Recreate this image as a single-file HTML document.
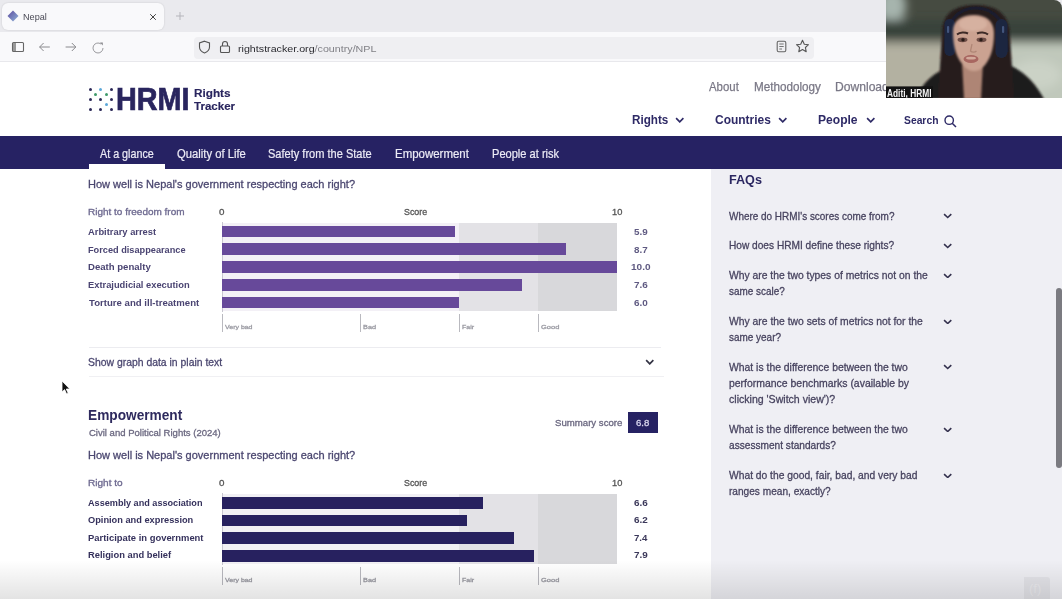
<!DOCTYPE html>
<html><head><meta charset="utf-8"><style>
html,body{margin:0;padding:0;width:1062px;height:599px;overflow:hidden;background:#fff;font-family:"Liberation Sans", sans-serif;}
.t{position:absolute;line-height:1;white-space:nowrap;transform-origin:0 0;}
.r{position:absolute;}
</style></head><body>
<div class="r" style="left:0.00px;top:0.00px;width:1062.00px;height:32.00px;background:#eaeaee;"></div>
<div class="r" style="left:2.00px;top:3.00px;width:162.00px;height:27.00px;background:#f9f9fb;border-radius:6px;box-shadow:0 0 2px rgba(0,0,0,0.15)"></div>
<svg class="r" style="left:7px;top:10px" width="12" height="12" viewBox="0 0 12 12"><defs><linearGradient id="tg" x1="0" y1="0" x2="1" y2="1"><stop offset="0" stop-color="#5b4a9e"/><stop offset="1" stop-color="#8fb3d9"/></linearGradient></defs><path d="M6 0.5 L11.5 6 L6 11.5 L0.5 6 Z" fill="url(#tg)"/></svg>
<div class="t" style="left:22.77px;top:13.26px;font-size:8.551px;font-weight:400;color:#4a4a55;transform:scaleX(1.0653);">Nepal</div>
<svg class="r" style="left:148.5px;top:13px" width="8" height="8" viewBox="0 0 8 8"><path d="M1.2 1.2 L6.8 6.8 M6.8 1.2 L1.2 6.8" stroke="#444" stroke-width="1"/></svg>
<svg class="r" style="left:175px;top:11px" width="10" height="10" viewBox="0 0 10 10"><path d="M5 1 V9 M1 5 H9" stroke="#b5b5bb" stroke-width="1"/></svg>
<div class="r" style="left:0.00px;top:32.00px;width:1062.00px;height:30.00px;background:#f9f9fb;"></div>
<div class="r" style="left:0.00px;top:60.50px;width:1062.00px;height:1.20px;background:#e8e8ec;"></div>
<svg class="r" style="left:11px;top:41px" width="14" height="12" viewBox="0 0 14 12"><rect x="1.5" y="1.5" width="11" height="9" rx="1" fill="none" stroke="#666" stroke-width="1.1"/><rect x="2" y="2" width="3" height="8" fill="#999"/></svg>
<svg class="r" style="left:38px;top:41px" width="14" height="12" viewBox="0 0 14 12"><path d="M11.8 6 H1.6 M5.6 2 L1.6 6 L5.6 10" fill="none" stroke="#8a8a8e" stroke-width="1"/></svg>
<svg class="r" style="left:64px;top:41px" width="14" height="12" viewBox="0 0 14 12"><path d="M1.6 6 H11.8 M7.8 2 L11.8 6 L7.8 10" fill="none" stroke="#8a8a8e" stroke-width="1"/></svg>
<svg class="r" style="left:91px;top:41px" width="14" height="13" viewBox="0 0 14 13"><path d="M12 7 A5 5 0 1 1 10 3" fill="none" stroke="#9a9a9e" stroke-width="1"/><path d="M9 1.6 L11.8 1.6 L11.8 4.4 Z" fill="#8a8a8e"/></svg>
<div class="r" style="left:193.50px;top:36.60px;width:620.50px;height:22.20px;background:#efeff2;border-radius:4px"></div>
<svg class="r" style="left:198px;top:40px" width="13" height="14" viewBox="0 0 13 14"><path d="M6.5 1.2 L11.5 3 V7 C11.5 10 9 12 6.5 13 C4 12 1.5 10 1.5 7 V3 Z" fill="none" stroke="#555" stroke-width="1.1"/></svg>
<svg class="r" style="left:219px;top:40px" width="12" height="14" viewBox="0 0 12 14"><rect x="1.5" y="6" width="9" height="6.5" rx="1" fill="none" stroke="#555" stroke-width="1.1"/><path d="M3.5 6 V4 A2.5 2.5 0 0 1 8.5 4 V6" fill="none" stroke="#555" stroke-width="1.1"/></svg>
<div class="t" style="left:238.45px;top:43.68px;font-size:9.710px;font-weight:400;color:#808086;transform:scaleX(1.1012);"><span style="color:#2b2b30">rightstracker.org</span>/country/NPL</div>
<svg class="r" style="left:776px;top:40px" width="11" height="13" viewBox="0 0 11 13"><rect x="1.2" y="1.2" width="8.6" height="10.6" rx="1.5" fill="none" stroke="#666" stroke-width="1.1"/><path d="M3.3 4 H7.7 M3.3 6.5 H7.7 M3.3 9 H6" stroke="#666" stroke-width="0.9"/></svg>
<svg class="r" style="left:795px;top:39px" width="15" height="15" viewBox="0 0 15 15"><path d="M7.5 1.3 L9.3 5.2 L13.5 5.7 L10.4 8.5 L11.2 12.7 L7.5 10.6 L3.8 12.7 L4.6 8.5 L1.5 5.7 L5.7 5.2 Z" fill="none" stroke="#555" stroke-width="1.1" stroke-linejoin="round"/></svg>
<div class="r" style="left:0.00px;top:62.00px;width:1062.00px;height:74.00px;background:#ffffff;"></div>
<div class="r" style="left:88.50px;top:88.00px;width:3.00px;height:3.00px;background:#2b2857;border-radius:50%"></div>
<div class="r" style="left:99.00px;top:88.00px;width:3.00px;height:3.00px;background:#5aa7d8;border-radius:50%"></div>
<div class="r" style="left:110.00px;top:88.00px;width:3.00px;height:3.00px;background:#2b2857;border-radius:50%"></div>
<div class="r" style="left:94.00px;top:93.00px;width:3.00px;height:3.00px;background:#3f9a6a;border-radius:50%"></div>
<div class="r" style="left:104.50px;top:93.00px;width:3.00px;height:3.00px;background:#3f9a6a;border-radius:50%"></div>
<div class="r" style="left:88.50px;top:98.00px;width:3.00px;height:3.00px;background:#2b2857;border-radius:50%"></div>
<div class="r" style="left:99.00px;top:98.00px;width:3.00px;height:3.00px;background:#2b2857;border-radius:50%"></div>
<div class="r" style="left:110.00px;top:98.00px;width:3.00px;height:3.00px;background:#2b2857;border-radius:50%"></div>
<div class="r" style="left:104.50px;top:102.80px;width:3.00px;height:3.00px;background:#5aa7d8;border-radius:50%"></div>
<div class="r" style="left:88.50px;top:107.90px;width:3.00px;height:3.00px;background:#2b2857;border-radius:50%"></div>
<div class="r" style="left:99.00px;top:107.90px;width:3.00px;height:3.00px;background:#2b2857;border-radius:50%"></div>
<div class="r" style="left:110.00px;top:107.90px;width:3.00px;height:3.00px;background:#2b2857;border-radius:50%"></div>
<div class="t" style="left:116.39px;top:84.30px;font-size:31.304px;font-weight:700;color:#29255e;transform:scaleX(0.9187);-webkit-text-stroke:0.7px currentColor">HRMI</div>
<div class="t" style="left:193.58px;top:87.79px;font-size:11.594px;font-weight:700;color:#29255e;transform:scaleX(1.0149);-webkit-text-stroke:0.15px currentColor">Rights</div>
<div class="t" style="left:194.28px;top:101.13px;font-size:11.304px;font-weight:700;color:#29255e;transform:scaleX(1.0224);-webkit-text-stroke:0.15px currentColor">Tracker</div>
<div class="t" style="left:708.90px;top:81.02px;font-size:12.029px;font-weight:400;color:#7a7886;transform:scaleX(0.9492);-webkit-text-stroke:0.25px currentColor">About</div>
<div class="t" style="left:753.56px;top:81.02px;font-size:12.029px;font-weight:400;color:#7a7886;transform:scaleX(0.9728);-webkit-text-stroke:0.25px currentColor">Methodology</div>
<div class="t" style="left:835.43px;top:81.02px;font-size:12.029px;font-weight:400;color:#7a7886;transform:scaleX(1.0073);-webkit-text-stroke:0.25px currentColor">Download</div>
<div class="t" style="left:631.58px;top:114.02px;font-size:12.029px;font-weight:700;color:#2e2a66;transform:scaleX(0.9727);">Rights</div>
<svg class="r" style="left:675.4px;top:116.5px" width="9.5" height="6" viewBox="0 0 9.5 6"><path d="M1.1 1.1 L4.75 4.9 L8.399999999999999 1.1" fill="none" stroke="#2e2a66" stroke-width="1.6"/></svg>
<div class="t" style="left:715.02px;top:114.02px;font-size:12.029px;font-weight:700;color:#2e2a66;transform:scaleX(0.9965);">Countries</div>
<svg class="r" style="left:778px;top:116.5px" width="9.5" height="6" viewBox="0 0 9.5 6"><path d="M1.1 1.1 L4.75 4.9 L8.399999999999999 1.1" fill="none" stroke="#2e2a66" stroke-width="1.6"/></svg>
<div class="t" style="left:817.55px;top:114.02px;font-size:12.029px;font-weight:700;color:#2e2a66;transform:scaleX(1.0044);">People</div>
<svg class="r" style="left:865.5px;top:116.5px" width="9.5" height="6" viewBox="0 0 9.5 6"><path d="M1.1 1.1 L4.75 4.9 L8.399999999999999 1.1" fill="none" stroke="#2e2a66" stroke-width="1.6"/></svg>
<div class="t" style="left:904.49px;top:114.68px;font-size:11.014px;font-weight:700;color:#2e2a66;transform:scaleX(0.9387);">Search</div>
<svg class="r" style="left:944px;top:115px" width="13" height="13" viewBox="0 0 13 13"><circle cx="5.2" cy="5.2" r="4.2" fill="none" stroke="#2e2a66" stroke-width="1.4"/><path d="M8.2 8.2 L12 12" stroke="#2e2a66" stroke-width="1.5"/></svg>
<div class="r" style="left:0.00px;top:136.00px;width:1062.00px;height:33.20px;background:#262263;"></div>
<div class="t" style="left:100.00px;top:149.04px;font-size:11.884px;font-weight:400;color:#ecebf6;transform:scaleX(0.9059);-webkit-text-stroke:0.2px currentColor">At a glance</div>
<div class="t" style="left:176.84px;top:149.04px;font-size:11.884px;font-weight:400;color:#ecebf6;transform:scaleX(0.9477);-webkit-text-stroke:0.2px currentColor">Quality of Life</div>
<div class="t" style="left:268.45px;top:149.04px;font-size:11.884px;font-weight:400;color:#ecebf6;transform:scaleX(0.9292);-webkit-text-stroke:0.2px currentColor">Safety from the State</div>
<div class="t" style="left:395.08px;top:149.04px;font-size:11.884px;font-weight:400;color:#ecebf6;transform:scaleX(0.9658);-webkit-text-stroke:0.2px currentColor">Empowerment</div>
<div class="t" style="left:491.61px;top:149.04px;font-size:11.884px;font-weight:400;color:#ecebf6;transform:scaleX(0.9329);-webkit-text-stroke:0.2px currentColor">People at risk</div>
<div class="r" style="left:88.60px;top:164.30px;width:76.60px;height:4.90px;background:#ffffff;"></div>
<div class="r" style="left:0.00px;top:169.20px;width:711.00px;height:430.00px;background:#ffffff;"></div>
<div class="r" style="left:711.00px;top:169.20px;width:351.00px;height:430.00px;background:#efeff4;"></div>
<div class="t" style="left:88.42px;top:179.19px;font-size:11.594px;font-weight:400;color:#4b4770;transform:scaleX(0.9508);-webkit-text-stroke:0.3px currentColor">How well is Nepal's government respecting each right?</div>
<div class="t" style="left:87.80px;top:208.17px;font-size:9.130px;font-weight:400;color:#6e6a90;transform:scaleX(1.0941);-webkit-text-stroke:0.3px currentColor">Right to freedom from</div>
<div class="t" style="left:218.91px;top:208.17px;font-size:9.130px;font-weight:400;color:#555;transform:scaleX(1.0724);-webkit-text-stroke:0.3px currentColor">0</div>
<div class="t" style="left:404.06px;top:208.17px;font-size:9.130px;font-weight:400;color:#555;transform:scaleX(0.9735);-webkit-text-stroke:0.3px currentColor">Score</div>
<div class="t" style="left:611.56px;top:208.17px;font-size:9.130px;font-weight:400;color:#555;transform:scaleX(1.0178);-webkit-text-stroke:0.3px currentColor">10</div>
<div class="r" style="left:222.00px;top:223.00px;width:237.00px;height:88.00px;background:#f3f0f6;"></div>
<div class="r" style="left:459.00px;top:223.00px;width:79.00px;height:88.00px;background:#e3e2e6;"></div>
<div class="r" style="left:538.00px;top:223.00px;width:79.00px;height:88.00px;background:#d8d8db;"></div>
<div class="r" style="left:221.50px;top:222.00px;width:1.00px;height:90.00px;background:#c8c6d0;"></div>
<div class="r" style="left:222.00px;top:225.50px;width:233.05px;height:11.80px;background:#67499a;"></div>
<div class="t" style="left:88.32px;top:227.97px;font-size:9.130px;font-weight:700;color:#4a4472;transform:scaleX(1.0257);">Arbitrary arrest</div>
<div class="t" style="left:633.70px;top:227.97px;font-size:9.130px;font-weight:700;color:#5f5a82;transform:scaleX(1.0786);">5.9</div>
<div class="r" style="left:222.00px;top:243.30px;width:343.65px;height:11.80px;background:#67499a;"></div>
<div class="t" style="left:87.96px;top:245.67px;font-size:9.130px;font-weight:700;color:#4a4472;transform:scaleX(1.0067);">Forced disappearance</div>
<div class="t" style="left:633.70px;top:245.67px;font-size:9.130px;font-weight:700;color:#5f5a82;transform:scaleX(1.0786);">8.7</div>
<div class="r" style="left:222.00px;top:261.00px;width:395.00px;height:11.80px;background:#67499a;"></div>
<div class="t" style="left:87.93px;top:263.37px;font-size:9.130px;font-weight:700;color:#4a4472;transform:scaleX(1.0496);">Death penalty</div>
<div class="t" style="left:630.65px;top:263.37px;font-size:9.130px;font-weight:700;color:#5f5a82;transform:scaleX(1.1012);">10.0</div>
<div class="r" style="left:222.00px;top:278.80px;width:300.20px;height:11.80px;background:#67499a;"></div>
<div class="t" style="left:87.95px;top:281.07px;font-size:9.130px;font-weight:700;color:#4a4472;transform:scaleX(1.0220);">Extrajudicial execution</div>
<div class="t" style="left:633.60px;top:281.07px;font-size:9.130px;font-weight:700;color:#5f5a82;transform:scaleX(1.0869);">7.6</div>
<div class="r" style="left:222.00px;top:296.50px;width:237.00px;height:11.80px;background:#67499a;"></div>
<div class="t" style="left:88.50px;top:298.77px;font-size:9.130px;font-weight:700;color:#4a4472;transform:scaleX(1.0522);">Torture and ill-treatment</div>
<div class="t" style="left:633.60px;top:298.77px;font-size:9.130px;font-weight:700;color:#5f5a82;transform:scaleX(1.0869);">6.0</div>
<div class="r" style="left:221.50px;top:314.40px;width:1.00px;height:17.60px;background:#b9b9bf;"></div>
<div class="t" style="left:225.13px;top:324.05px;font-size:6.087px;font-weight:400;color:#9c9ca4;transform:scaleX(1.1462);-webkit-text-stroke:0.3px currentColor">Very bad</div>
<div class="r" style="left:359.50px;top:314.40px;width:1.00px;height:17.60px;background:#b9b9bf;"></div>
<div class="t" style="left:362.61px;top:324.05px;font-size:6.087px;font-weight:400;color:#9c9ca4;transform:scaleX(1.2095);-webkit-text-stroke:0.3px currentColor">Bad</div>
<div class="r" style="left:458.50px;top:314.40px;width:1.00px;height:17.60px;background:#b9b9bf;"></div>
<div class="t" style="left:461.64px;top:324.05px;font-size:6.087px;font-weight:400;color:#9c9ca4;transform:scaleX(1.1591);-webkit-text-stroke:0.3px currentColor">Fair</div>
<div class="r" style="left:537.50px;top:314.40px;width:1.00px;height:17.60px;background:#b9b9bf;"></div>
<div class="t" style="left:540.82px;top:324.05px;font-size:6.087px;font-weight:400;color:#9c9ca4;transform:scaleX(1.2339);-webkit-text-stroke:0.3px currentColor">Good</div>
<div class="r" style="left:89.00px;top:347.00px;width:572.00px;height:1.00px;background:#ececf0;"></div>
<div class="r" style="left:89.00px;top:376.30px;width:575.00px;height:1.20px;background:#f0f0f3;"></div>
<div class="t" style="left:88.48px;top:356.61px;font-size:11.449px;font-weight:400;color:#4b4770;transform:scaleX(0.9095);-webkit-text-stroke:0.3px currentColor">Show graph data in plain text</div>
<svg class="r" style="left:645px;top:358.8px" width="9.5" height="6" viewBox="0 0 9.5 6"><path d="M1.15 1.15 L4.75 4.8500000000000005 L8.35 1.15" fill="none" stroke="#333344" stroke-width="1.7"/></svg>
<svg class="r" style="left:60.8px;top:379.6px" width="10" height="15" viewBox="0 0 10 15"><path d="M1 1 L1 12 L3.6 9.6 L5.6 14 L7.2 13.3 L5.3 9 L8.8 9 Z" fill="#111" stroke="#fff" stroke-width="0.8"/></svg>
<div class="t" style="left:88.04px;top:408.45px;font-size:14.348px;font-weight:700;color:#2e2a5e;transform:scaleX(0.9549);">Empowerment</div>
<div class="t" style="left:88.52px;top:427.98px;font-size:9.710px;font-weight:400;color:#6b6880;transform:scaleX(0.9811);-webkit-text-stroke:0.3px currentColor">Civil and Political Rights (2024)</div>
<div class="t" style="left:554.72px;top:418.87px;font-size:9.130px;font-weight:400;color:#6b6880;transform:scaleX(1.0540);-webkit-text-stroke:0.3px currentColor">Summary score</div>
<div class="r" style="left:628.00px;top:412.00px;width:30.20px;height:21.00px;background:#262263;"></div>
<div class="t" style="left:636.42px;top:418.87px;font-size:9.130px;font-weight:400;color:#d9d6ee;transform:scaleX(1.0531);-webkit-text-stroke:0.3px currentColor">6.8</div>
<div class="t" style="left:88.42px;top:450.03px;font-size:11.304px;font-weight:400;color:#4b4770;transform:scaleX(0.9751);-webkit-text-stroke:0.3px currentColor">How well is Nepal's government respecting each right?</div>
<div class="t" style="left:87.80px;top:479.27px;font-size:9.130px;font-weight:400;color:#6e6a90;transform:scaleX(1.1018);-webkit-text-stroke:0.3px currentColor">Right to</div>
<div class="t" style="left:218.91px;top:479.27px;font-size:9.130px;font-weight:400;color:#555;transform:scaleX(1.0724);-webkit-text-stroke:0.3px currentColor">0</div>
<div class="t" style="left:404.06px;top:479.27px;font-size:9.130px;font-weight:400;color:#555;transform:scaleX(0.9735);-webkit-text-stroke:0.3px currentColor">Score</div>
<div class="t" style="left:611.56px;top:479.27px;font-size:9.130px;font-weight:400;color:#555;transform:scaleX(1.0178);-webkit-text-stroke:0.3px currentColor">10</div>
<div class="r" style="left:222.00px;top:494.00px;width:237.00px;height:70.00px;background:#f1f0f4;"></div>
<div class="r" style="left:459.00px;top:494.00px;width:79.00px;height:70.00px;background:#e3e2e6;"></div>
<div class="r" style="left:538.00px;top:494.00px;width:79.00px;height:70.00px;background:#d8d8db;"></div>
<div class="r" style="left:221.50px;top:493.00px;width:1.00px;height:72.00px;background:#c8c6d0;"></div>
<div class="r" style="left:222.00px;top:496.90px;width:260.70px;height:11.80px;background:#27215f;"></div>
<div class="t" style="left:88.33px;top:498.67px;font-size:9.130px;font-weight:700;color:#35315c;transform:scaleX(0.9986);">Assembly and association</div>
<div class="t" style="left:633.60px;top:498.67px;font-size:9.130px;font-weight:700;color:#3b385a;transform:scaleX(1.0869);">6.6</div>
<div class="r" style="left:222.00px;top:514.60px;width:244.90px;height:11.80px;background:#27215f;"></div>
<div class="t" style="left:88.23px;top:516.27px;font-size:9.130px;font-weight:700;color:#35315c;transform:scaleX(1.0128);">Opinion and expression</div>
<div class="t" style="left:633.60px;top:516.27px;font-size:9.130px;font-weight:700;color:#3b385a;transform:scaleX(1.0869);">6.2</div>
<div class="r" style="left:222.00px;top:532.30px;width:292.30px;height:11.80px;background:#27215f;"></div>
<div class="t" style="left:87.94px;top:533.97px;font-size:9.130px;font-weight:700;color:#35315c;transform:scaleX(1.0306);">Participate in government</div>
<div class="t" style="left:633.61px;top:533.97px;font-size:9.130px;font-weight:700;color:#3b385a;transform:scaleX(1.0547);">7.4</div>
<div class="r" style="left:222.00px;top:550.00px;width:312.05px;height:11.80px;background:#27215f;"></div>
<div class="t" style="left:87.95px;top:551.47px;font-size:9.130px;font-weight:700;color:#35315c;transform:scaleX(1.0245);">Religion and belief</div>
<div class="t" style="left:633.60px;top:551.47px;font-size:9.130px;font-weight:700;color:#3b385a;transform:scaleX(1.0869);">7.9</div>
<div class="r" style="left:221.50px;top:567.40px;width:1.00px;height:17.60px;background:#b9b9bf;"></div>
<div class="t" style="left:225.13px;top:577.05px;font-size:6.087px;font-weight:400;color:#9c9ca4;transform:scaleX(1.1462);-webkit-text-stroke:0.3px currentColor">Very bad</div>
<div class="r" style="left:359.50px;top:567.40px;width:1.00px;height:17.60px;background:#b9b9bf;"></div>
<div class="t" style="left:362.61px;top:577.05px;font-size:6.087px;font-weight:400;color:#9c9ca4;transform:scaleX(1.2095);-webkit-text-stroke:0.3px currentColor">Bad</div>
<div class="r" style="left:458.50px;top:567.40px;width:1.00px;height:17.60px;background:#b9b9bf;"></div>
<div class="t" style="left:461.64px;top:577.05px;font-size:6.087px;font-weight:400;color:#9c9ca4;transform:scaleX(1.1591);-webkit-text-stroke:0.3px currentColor">Fair</div>
<div class="r" style="left:537.50px;top:567.40px;width:1.00px;height:17.60px;background:#b9b9bf;"></div>
<div class="t" style="left:540.82px;top:577.05px;font-size:6.087px;font-weight:400;color:#9c9ca4;transform:scaleX(1.2339);-webkit-text-stroke:0.3px currentColor">Good</div>
<div class="t" style="left:729.32px;top:173.98px;font-size:12.899px;font-weight:700;color:#2a2660;transform:scaleX(0.9800);">FAQs</div>
<svg class="r" style="left:943.3px;top:213.4px" width="9.4" height="5.6" viewBox="0 0 9.4 5.6"><path d="M1.1 1.1 L4.7 4.5 L8.299999999999999 1.1" fill="none" stroke="#34314e" stroke-width="1.6"/></svg>
<div class="t" style="left:729.40px;top:210.51px;font-size:11.449px;font-weight:400;color:#47435f;transform:scaleX(0.8692);-webkit-text-stroke:0.3px currentColor">Where do HRMI's scores come from?</div>
<svg class="r" style="left:943.3px;top:243.0px" width="9.4" height="5.6" viewBox="0 0 9.4 5.6"><path d="M1.1 1.1 L4.7 4.5 L8.299999999999999 1.1" fill="none" stroke="#34314e" stroke-width="1.6"/></svg>
<div class="t" style="left:728.69px;top:240.11px;font-size:11.449px;font-weight:400;color:#47435f;transform:scaleX(0.8864);-webkit-text-stroke:0.3px currentColor">How does HRMI define these rights?</div>
<svg class="r" style="left:943.3px;top:272.59999999999997px" width="9.4" height="5.6" viewBox="0 0 9.4 5.6"><path d="M1.1 1.1 L4.7 4.5 L8.299999999999999 1.1" fill="none" stroke="#34314e" stroke-width="1.6"/></svg>
<div class="t" style="left:729.40px;top:269.71px;font-size:11.449px;font-weight:400;color:#47435f;transform:scaleX(0.9039);-webkit-text-stroke:0.3px currentColor">Why are the two types of metrics not on the</div>
<div class="t" style="left:729.20px;top:286.01px;font-size:11.449px;font-weight:400;color:#47435f;transform:scaleX(0.8671);-webkit-text-stroke:0.3px currentColor">same scale?</div>
<svg class="r" style="left:943.3px;top:318.5px" width="9.4" height="5.6" viewBox="0 0 9.4 5.6"><path d="M1.1 1.1 L4.7 4.5 L8.299999999999999 1.1" fill="none" stroke="#34314e" stroke-width="1.6"/></svg>
<div class="t" style="left:729.40px;top:315.61px;font-size:11.449px;font-weight:400;color:#47435f;transform:scaleX(0.9048);-webkit-text-stroke:0.3px currentColor">Why are the two sets of metrics not for the</div>
<div class="t" style="left:729.20px;top:331.91px;font-size:11.449px;font-weight:400;color:#47435f;transform:scaleX(0.8700);-webkit-text-stroke:0.3px currentColor">same year?</div>
<svg class="r" style="left:943.3px;top:364.4px" width="9.4" height="5.6" viewBox="0 0 9.4 5.6"><path d="M1.1 1.1 L4.7 4.5 L8.299999999999999 1.1" fill="none" stroke="#34314e" stroke-width="1.6"/></svg>
<div class="t" style="left:729.40px;top:361.51px;font-size:11.449px;font-weight:400;color:#47435f;transform:scaleX(0.9080);-webkit-text-stroke:0.3px currentColor">What is the difference between the two</div>
<div class="t" style="left:728.77px;top:377.81px;font-size:11.449px;font-weight:400;color:#47435f;transform:scaleX(0.9136);-webkit-text-stroke:0.3px currentColor">performance benchmarks (available by</div>
<div class="t" style="left:729.08px;top:394.11px;font-size:11.449px;font-weight:400;color:#47435f;transform:scaleX(0.9242);-webkit-text-stroke:0.3px currentColor">clicking 'Switch view')?</div>
<svg class="r" style="left:943.3px;top:426.59999999999997px" width="9.4" height="5.6" viewBox="0 0 9.4 5.6"><path d="M1.1 1.1 L4.7 4.5 L8.299999999999999 1.1" fill="none" stroke="#34314e" stroke-width="1.6"/></svg>
<div class="t" style="left:729.40px;top:423.71px;font-size:11.449px;font-weight:400;color:#47435f;transform:scaleX(0.9080);-webkit-text-stroke:0.3px currentColor">What is the difference between the two</div>
<div class="t" style="left:729.09px;top:440.01px;font-size:11.449px;font-weight:400;color:#47435f;transform:scaleX(0.8851);-webkit-text-stroke:0.3px currentColor">assessment standards?</div>
<svg class="r" style="left:943.3px;top:472.5px" width="9.4" height="5.6" viewBox="0 0 9.4 5.6"><path d="M1.1 1.1 L4.7 4.5 L8.299999999999999 1.1" fill="none" stroke="#34314e" stroke-width="1.6"/></svg>
<div class="t" style="left:729.40px;top:469.61px;font-size:11.449px;font-weight:400;color:#47435f;transform:scaleX(0.8983);-webkit-text-stroke:0.3px currentColor">What do the good, fair, bad, and very bad</div>
<div class="t" style="left:728.79px;top:485.91px;font-size:11.449px;font-weight:400;color:#47435f;transform:scaleX(0.8840);-webkit-text-stroke:0.3px currentColor">ranges mean, exactly?</div>
<div class="r" style="left:1056.00px;top:288.00px;width:5.50px;height:180.00px;background:#7b7b81;border-radius:3px"></div>
<div class="r" style="left:1024.00px;top:577.00px;width:26.00px;height:22.00px;background:rgba(0,0,0,0.045);border-top-right-radius:3px"></div>
<div class="t" style="left:1029px;top:582px;font-size:13px;color:rgba(255,255,255,0.35)">(f)</div>
<div class="r" style="left:0;top:560px;width:1062px;height:39px;background:linear-gradient(to bottom, rgba(0,0,0,0), rgba(0,0,0,0.11))"></div>
<svg class="r" style="left:886px;top:0" width="176" height="98.3" viewBox="0 0 176 98.3">
<defs>
<clipPath id="cc"><path d="M0 0 H168 A8 8 0 0 1 176 8 V98.3 H0 Z"/></clipPath>
<filter id="b6" x="-50%" y="-50%" width="200%" height="200%"><feGaussianBlur stdDeviation="5"/></filter>
<filter id="b3" x="-50%" y="-50%" width="200%" height="200%"><feGaussianBlur stdDeviation="2.5"/></filter>
<filter id="b1" x="-50%" y="-50%" width="200%" height="200%"><feGaussianBlur stdDeviation="1"/></filter>
<filter id="b05" x="-50%" y="-50%" width="200%" height="200%"><feGaussianBlur stdDeviation="0.6"/></filter>
</defs>
<g clip-path="url(#cc)">
<rect x="0" y="0" width="176" height="99" fill="#464b41"/>
<g filter="url(#b6)">
<ellipse cx="6" cy="6" rx="14" ry="18" fill="#a6b4ad"/>
<rect x="-10" y="20" width="200" height="20" fill="#37433a"/>
<rect x="-10" y="42" width="100" height="70" fill="#b3b1a1"/>
<rect x="95" y="42" width="95" height="70" fill="#c0c8bb"/>
<ellipse cx="150" cy="75" rx="25" ry="15" fill="#cbd2c6"/>
</g>
<g filter="url(#b1)">
<path d="M30 99 C36 82 48 72 66 66 L116 62 C134 68 148 80 158 99 Z" fill="#1f1b1b"/>
<path d="M56 34 C56 12 70 5 90 5 C110 5 124 14 124 36 L128 99 L52 99 Z" fill="#251d1d"/>
</g>
<g filter="url(#b05)">
<path d="M60 50 C58 22 72 8 90 8 C108 8 122 22 121 52" fill="none" stroke="#1a1e2e" stroke-width="3"/>
<rect x="58.5" y="19" width="10.5" height="37" rx="5" fill="#1f2640"/>
<rect x="109.5" y="19" width="12" height="39" rx="6" fill="#1f2640"/>
<rect x="61" y="26" width="2.2" height="7" rx="1.1" fill="#43557c"/>
<rect x="116" y="26" width="2.2" height="7" rx="1.1" fill="#43557c"/>
</g>
<g filter="url(#b1)">
<path d="M76 62 L97 62 L95 99 L78 99 Z" fill="#ae8575"/>
<path d="M67 32 C67 20 76 15 88 15 C100 15 108 21 108 33 C108 49 104 61 96 68 C92 72 84 72 80 68 C71 60 67 48 67 32 Z" fill="#cba291"/>
<ellipse cx="87" cy="24" rx="14" ry="7" fill="#d6b1a0"/>
</g>
<g filter="url(#b05)">
<path d="M71 34.5 C74 32 79 32 82 33.5" fill="none" stroke="#3d2a27" stroke-width="2"/>
<path d="M91 33.5 C94 32 99 32 102 34.5" fill="none" stroke="#3d2a27" stroke-width="2"/>
<ellipse cx="76.5" cy="39.8" rx="5" ry="2.4" fill="#6e4e46"/>
<ellipse cx="95.5" cy="39.8" rx="5" ry="2.4" fill="#6e4e46"/>
<circle cx="77" cy="39.8" r="1.7" fill="#2a1a18"/>
<circle cx="95" cy="39.8" r="1.7" fill="#2a1a18"/>
<path d="M86 44 L84.5 51 C86 52.5 89 52.5 90.5 51" fill="none" stroke="#b08676" stroke-width="1.3"/>
<ellipse cx="85" cy="59" rx="7.5" ry="4" fill="#a86660"/>
<ellipse cx="85" cy="58.2" rx="5" ry="1.4" fill="#d3aa9c"/>
</g>
<rect x="0" y="86.4" width="47" height="12" fill="#121212"/>
</g>
</svg>
<div class="t" style="left:886.55px;top:87.92px;font-size:10.725px;font-weight:700;color:#f4f4f4;transform:scaleX(0.7776);">Aditi, HRMI</div>
</body></html>
